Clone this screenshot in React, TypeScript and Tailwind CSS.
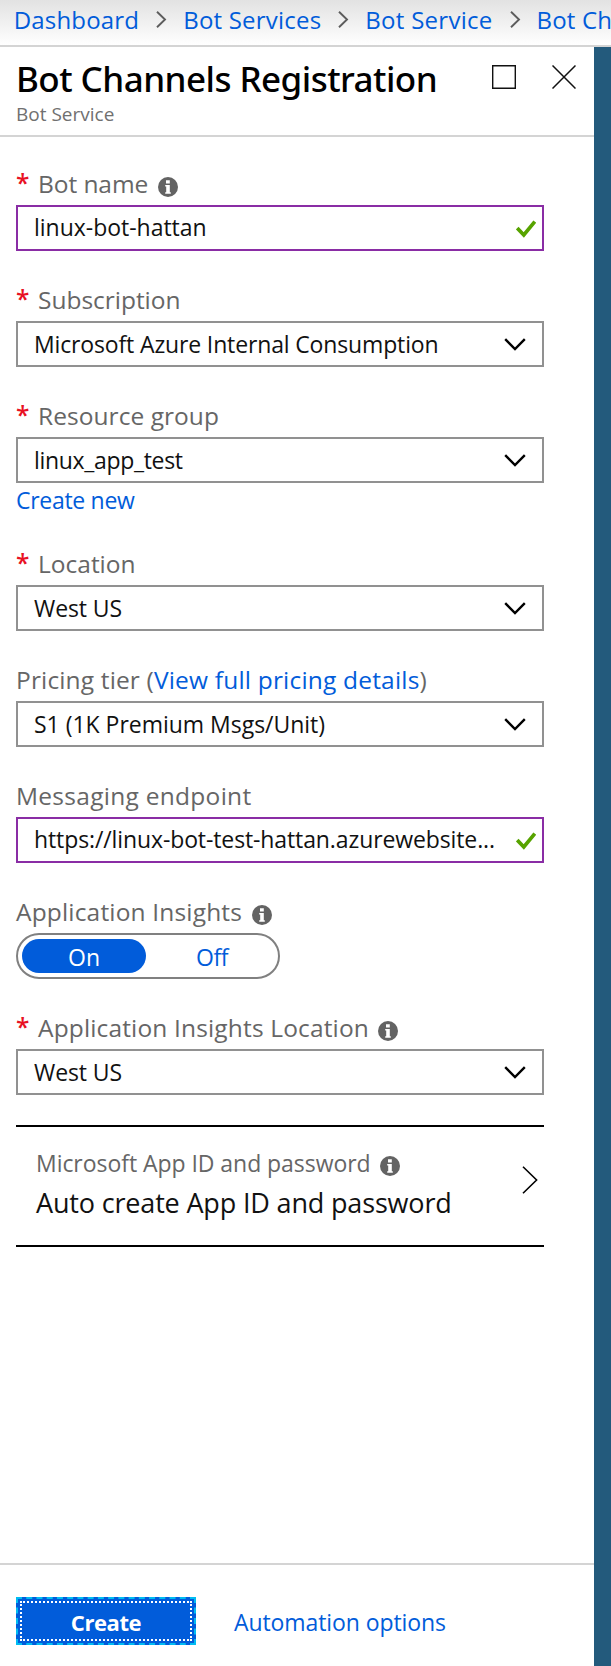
import type { ReactNode } from "react";

function InfoIcon({ className = "" }: { className?: string }) {
  return (
    <svg viewBox="0 0 20 20" className={`h-5 w-5 shrink-0 ${className}`} aria-hidden="true">
      <circle cx="10" cy="10" r="10" fill="#636363" />
      <path d="M8 3.2h3.8v3.2H8zM7.2 8h4.6v7.2h1v1.6H7.2v-1.6h1V9.6h-1z" fill="#fff" />
    </svg>
  );
}

function CheckIcon() {
  return (
    <svg viewBox="0 0 20 18" className="h-[18px] w-5 shrink-0" aria-hidden="true">
      <path d="M1.2 8 7.8 15 18.8 1.6" fill="none" stroke="#57a300" strokeWidth="3.7" />
    </svg>
  );
}

function DownIcon() {
  return (
    <svg viewBox="0 0 22 13" className="mt-px h-[13px] w-[22px] shrink-0" aria-hidden="true">
      <path d="M1.2 1.2 11 11 20.8 1.2" fill="none" stroke="#000" strokeWidth="2.4" />
    </svg>
  );
}

function CrumbArrow() {
  return (
    <svg viewBox="0 0 11 17" className="mr-4 ml-[17px] h-[17px] w-[11px] shrink-0" aria-hidden="true">
      <path d="M1 .8 9 8.5 1 16.2" fill="none" stroke="#5c5c5c" strokeWidth="1.9" />
    </svg>
  );
}

type LabelProps = {
  children: ReactNode;
  required?: boolean;
  info?: boolean;
  infoGap?: string;
};

function Label({ children, required, info, infoGap = "ml-[10px]" }: LabelProps) {
  return (
    <div className="mb-[5px] flex h-8 items-center text-[24.5px] leading-8 whitespace-nowrap text-[#666]">
      {required && <span className="-mt-[3px] w-[22px] shrink-0 font-semibold text-[#e81123]">*</span>}
      {children}
      {info && <InfoIcon className={`mt-[5px] ${infoGap}`} />}
    </div>
  );
}

function TextField({ children }: { children: ReactNode }) {
  return (
    <div className="flex h-[46px] items-center justify-between border-2 border-[#8a2da5] pr-[6px] pl-4">
      <span className="pb-[2px] text-[23px] leading-8 whitespace-nowrap text-[#111]">{children}</span>
      <span className="pt-[2px]">
        <CheckIcon />
      </span>
    </div>
  );
}

function SelectField({ children }: { children: ReactNode }) {
  return (
    <div className="flex h-[46px] items-center justify-between border-2 border-[#919191] pr-4 pl-4">
      <span className="text-[23px] leading-8 whitespace-nowrap text-[#111]">{children}</span>
      <DownIcon />
    </div>
  );
}

export default function App() {
  return (
    <div className="flex h-[1666px] w-[611px] flex-col overflow-hidden bg-[#235a7c] font-['Open_Sans',sans-serif]">
      <nav className="flex h-[47px] shrink-0 items-center border-b-2 border-[#d4d4d4] bg-linear-to-b from-[#e2e2e2] to-white pb-[6px] pl-[13.7px] text-2xl whitespace-nowrap text-[#015cda]">
        <span className="pt-px tracking-[0.18px]">Dashboard</span>
        <CrumbArrow />
        <span className="pt-px tracking-[0.21px]">Bot Services</span>
        <CrumbArrow />
        <span className="pt-px tracking-[0.27px]">Bot Service</span>
        <CrumbArrow />
        <span className="pt-px tracking-[0.2px]">Bot Channels Registration</span>
      </nav>

      <section className="flex w-[594px] grow flex-col bg-white">
        <header className="flex h-[90px] shrink-0 justify-between border-b-2 border-[#d4d4d4] pr-[18px] pl-4">
          <div className="flex flex-col">
            <h1 className="mt-2 h-12 font-['Noto_Sans',sans-serif] text-[35px] leading-12 font-medium tracking-[-0.54px] whitespace-nowrap text-black">
              Bot Channels Registration
            </h1>
            <p className="-mt-px text-[19px] leading-6 tracking-[0px] text-[#707070]">Bot Service</p>
          </div>
          <div className="flex gap-9 pt-[18px]">
            <svg viewBox="0 0 24 24" className="h-6 w-6" aria-hidden="true">
              <path d="M.7.7h22.6v22.6H.7z" fill="none" stroke="#111" strokeWidth="1.4" />
            </svg>
            <svg viewBox="0 0 24 24" className="h-6 w-6" aria-hidden="true">
              <path d="m.5.5 23 23M23.5.5l-23 23" fill="none" stroke="#111" strokeWidth="1.5" />
            </svg>
          </div>
        </header>

        <main className="flex grow flex-col pt-[31px] pr-[50px] pl-4">
          <div className="mb-[33px]">
            <Label required info>
              <span className="tracking-[-0.07px]">Bot name</span>
            </Label>
            <TextField>
              <span className="tracking-[-0.02px]">linux-bot-hattan</span>
            </TextField>
          </div>

          <div className="mb-[33px]">
            <Label required>
              <span className="tracking-[-0.02px]">Subscription</span>
            </Label>
            <SelectField>
              <span className="tracking-[-0.145px]">Microsoft Azure Internal Consumption</span>
            </SelectField>
          </div>

          <div className="mb-[33px]">
            <Label required>
              <span className="tracking-[0.05px]">Resource group</span>
            </Label>
            <SelectField>
              <span className="tracking-[-0.32px]">linux_app_test</span>
            </SelectField>
            <a className="block h-8 text-[23px] leading-[35px] tracking-[-0.3px] text-[#015cda]">Create new</a>
          </div>

          <div className="mb-[33px]">
            <Label required>
              <span>Location</span>
            </Label>
            <SelectField>
              <span className="tracking-[-0.1px]">West US</span>
            </SelectField>
          </div>

          <div className="mb-[33px]">
            <Label>
              <span className="tracking-[0.15px]">Pricing tier (</span>
              <a className="tracking-[0.19px] text-[#015cda]">View full pricing details</a>
              <span>)</span>
            </Label>
            <SelectField>
              <span className="tracking-[-0.02px]">S1 (1K Premium Msgs/Unit)</span>
            </SelectField>
          </div>

          <div className="mb-[33px]">
            <Label>
              <span className="tracking-[0.28px]">Messaging endpoint</span>
            </Label>
            <TextField>
              <span className="tracking-[-0.11px]">https://linux-bot-test-hattan.azurewebsite...</span>
            </TextField>
          </div>

          <div className="mb-[33px]">
            <Label info infoGap="ml-[9.5px]">
              <span className="tracking-[0.17px]">Application Insights</span>
            </Label>
            <div className="flex h-[46px] w-[264px] items-center rounded-full border-2 border-[#808080] px-1 text-[23px] leading-[34px]">
              <span className="h-[34px] w-[124px] shrink-0 rounded-full bg-[#015cda] pt-px text-center text-white">On</span>
              <span className="h-[34px] w-[132px] shrink-0 pt-px text-center tracking-[-0.5px] text-[#015cda]">Off</span>
            </div>
          </div>

          <div className="mb-[30px]">
            <Label required info infoGap="ml-[9.5px]">
              <span className="tracking-[0.15px]">Application Insights Location</span>
            </Label>
            <SelectField>
              <span className="tracking-[-0.1px]">West US</span>
            </SelectField>
          </div>

          <div className="flex h-[122px] items-center justify-between border-y-2 border-black pr-[6px] pb-[4px] pl-5">
            <div>
              <div className="flex h-8 items-center text-[23px] leading-8 tracking-[-0.05px] whitespace-nowrap text-[#666]">
                Microsoft App ID and password
                <InfoIcon className="mt-[5px] ml-[9px]" />
              </div>
              <div className="mt-[6px] text-[27px] leading-9 tracking-[-0.165px] whitespace-nowrap text-[#111]">
                Auto create App ID and password
              </div>
            </div>
            <svg viewBox="0 0 16 28" className="mb-2 h-7 w-4" aria-hidden="true">
              <path d="M1 .8 14.6 14 1 27.2" fill="none" stroke="#000" strokeWidth="1.6" />
            </svg>
          </div>
        </main>

        <footer className="flex h-[103px] shrink-0 items-start border-t-2 border-[#d4d4d4] pt-8 pl-4">
          <button className="h-12 w-[180px] border-2 border-dashed border-[#00bcf2] bg-[#015cda] p-[2px]">
            <span className="flex h-full items-center justify-center border-2 border-dotted border-white pt-[2px] text-[22px] leading-8 font-bold tracking-[-0.4px] text-white">
              Create
            </span>
          </button>
          <a className="ml-[38px] pt-px text-[23px] leading-12 tracking-[-0.09px] text-[#015cda]">Automation options</a>
        </footer>
      </section>
    </div>
  );
}
